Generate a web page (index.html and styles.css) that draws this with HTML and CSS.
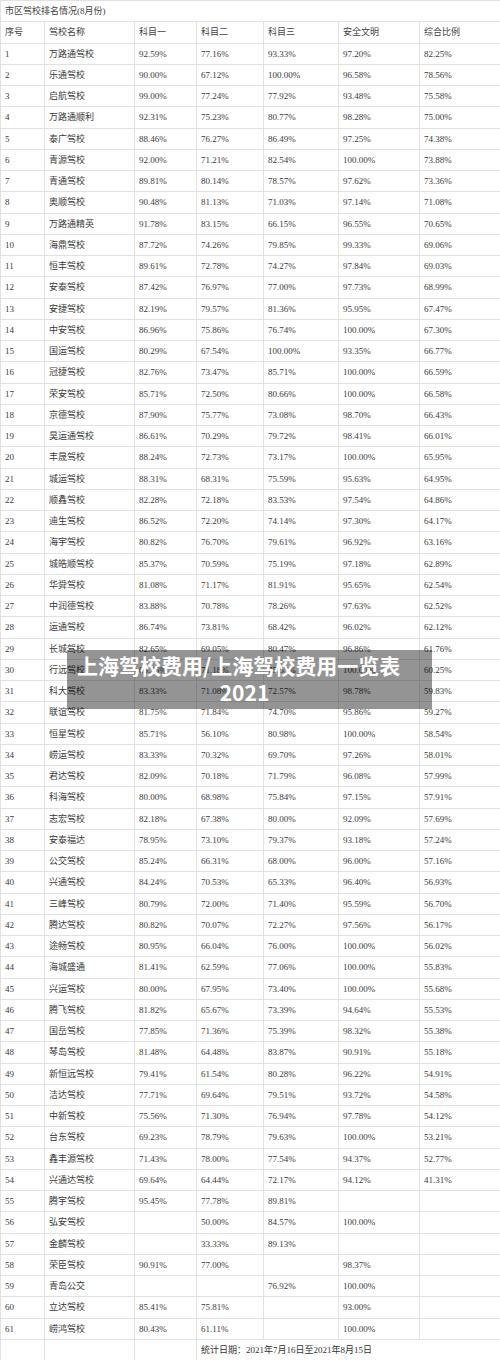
FILE: index.html
```html
<!DOCTYPE html>
<html lang="zh-CN">
<head>
<meta charset="utf-8">
<title>上海驾校费用</title>
<link rel="stylesheet" href="styles.css">
</head>
<body>
<div class="page">
<table class="sheet">
<colgroup>
<col class="c1"><col class="c2"><col class="c3"><col class="c4"><col class="c5"><col class="c6"><col class="c7">
</colgroup>
<tbody>
<tr class="title-row"><td colspan="7">市区驾校排名情况(8月份)</td></tr>
<tr class="head-row"><td>序号</td><td>驾校名称</td><td>科目一</td><td>科目二</td><td>科目三</td><td>安全文明</td><td>综合比例</td></tr>
<tr><td>1</td><td>万路通驾校</td><td>92.59%</td><td>77.16%</td><td>93.33%</td><td>97.20%</td><td>82.25%</td></tr>
<tr><td>2</td><td>乐通驾校</td><td>90.00%</td><td>67.12%</td><td>100.00%</td><td>96.58%</td><td>78.56%</td></tr>
<tr><td>3</td><td>启航驾校</td><td>99.00%</td><td>77.24%</td><td>77.92%</td><td>93.48%</td><td>75.58%</td></tr>
<tr><td>4</td><td>万路通顺利</td><td>92.31%</td><td>75.23%</td><td>80.77%</td><td>98.28%</td><td>75.00%</td></tr>
<tr><td>5</td><td>泰广驾校</td><td>88.46%</td><td>76.27%</td><td>86.49%</td><td>97.25%</td><td>74.38%</td></tr>
<tr><td>6</td><td>青源驾校</td><td>92.00%</td><td>71.21%</td><td>82.54%</td><td>100.00%</td><td>73.88%</td></tr>
<tr><td>7</td><td>青通驾校</td><td>89.81%</td><td>80.14%</td><td>78.57%</td><td>97.62%</td><td>73.36%</td></tr>
<tr><td>8</td><td>奥顺驾校</td><td>90.48%</td><td>81.13%</td><td>71.03%</td><td>97.14%</td><td>71.08%</td></tr>
<tr><td>9</td><td>万路通精英</td><td>91.78%</td><td>83.15%</td><td>66.15%</td><td>96.55%</td><td>70.65%</td></tr>
<tr><td>10</td><td>海鼎驾校</td><td>87.72%</td><td>74.26%</td><td>79.85%</td><td>99.33%</td><td>69.06%</td></tr>
<tr><td>11</td><td>恒丰驾校</td><td>89.61%</td><td>72.78%</td><td>74.27%</td><td>97.84%</td><td>69.03%</td></tr>
<tr><td>12</td><td>安泰驾校</td><td>87.42%</td><td>76.97%</td><td>77.00%</td><td>97.73%</td><td>68.99%</td></tr>
<tr><td>13</td><td>安捷驾校</td><td>82.19%</td><td>79.57%</td><td>81.36%</td><td>95.95%</td><td>67.47%</td></tr>
<tr><td>14</td><td>中安驾校</td><td>86.96%</td><td>75.86%</td><td>76.74%</td><td>100.00%</td><td>67.30%</td></tr>
<tr><td>15</td><td>国运驾校</td><td>80.29%</td><td>67.54%</td><td>100.00%</td><td>93.35%</td><td>66.77%</td></tr>
<tr><td>16</td><td>冠捷驾校</td><td>82.76%</td><td>73.47%</td><td>85.71%</td><td>100.00%</td><td>66.59%</td></tr>
<tr><td>17</td><td>荣安驾校</td><td>85.71%</td><td>72.50%</td><td>80.66%</td><td>100.00%</td><td>66.58%</td></tr>
<tr><td>18</td><td>京德驾校</td><td>87.90%</td><td>75.77%</td><td>73.08%</td><td>98.70%</td><td>66.43%</td></tr>
<tr><td>19</td><td>昊运通驾校</td><td>86.61%</td><td>70.29%</td><td>79.72%</td><td>98.41%</td><td>66.01%</td></tr>
<tr><td>20</td><td>丰晟驾校</td><td>88.24%</td><td>72.73%</td><td>73.17%</td><td>100.00%</td><td>65.95%</td></tr>
<tr><td>21</td><td>城运驾校</td><td>88.31%</td><td>68.31%</td><td>75.59%</td><td>95.63%</td><td>64.95%</td></tr>
<tr><td>22</td><td>顺鑫驾校</td><td>82.28%</td><td>72.18%</td><td>83.53%</td><td>97.54%</td><td>64.86%</td></tr>
<tr><td>23</td><td>迪生驾校</td><td>86.52%</td><td>72.20%</td><td>74.14%</td><td>97.30%</td><td>64.17%</td></tr>
<tr><td>24</td><td>海宇驾校</td><td>80.82%</td><td>76.70%</td><td>79.61%</td><td>96.92%</td><td>63.16%</td></tr>
<tr><td>25</td><td>城皓顺驾校</td><td>85.37%</td><td>70.59%</td><td>75.19%</td><td>97.18%</td><td>62.89%</td></tr>
<tr><td>26</td><td>华舜驾校</td><td>81.08%</td><td>71.17%</td><td>81.91%</td><td>95.65%</td><td>62.54%</td></tr>
<tr><td>27</td><td>中润德驾校</td><td>83.88%</td><td>70.78%</td><td>78.26%</td><td>97.63%</td><td>62.52%</td></tr>
<tr><td>28</td><td>运通驾校</td><td>86.74%</td><td>73.81%</td><td>68.42%</td><td>96.02%</td><td>62.12%</td></tr>
<tr><td>29</td><td>长城驾校</td><td>82.65%</td><td>69.05%</td><td>80.47%</td><td>96.86%</td><td>61.76%</td></tr>
<tr><td>30</td><td>行远驾校</td><td>69.35%</td><td>71.18%</td><td>75.55%</td><td>100.00%</td><td>60.25%</td></tr>
<tr><td>31</td><td>科大驾校</td><td>83.33%</td><td>71.08%</td><td>72.57%</td><td>98.78%</td><td>59.83%</td></tr>
<tr><td>32</td><td>联谊驾校</td><td>81.75%</td><td>71.84%</td><td>74.70%</td><td>95.86%</td><td>59.27%</td></tr>
<tr><td>33</td><td>恒星驾校</td><td>85.71%</td><td>56.10%</td><td>80.98%</td><td>100.00%</td><td>58.54%</td></tr>
<tr><td>34</td><td>崂运驾校</td><td>83.33%</td><td>70.32%</td><td>69.70%</td><td>97.26%</td><td>58.01%</td></tr>
<tr><td>35</td><td>君达驾校</td><td>82.09%</td><td>70.18%</td><td>71.79%</td><td>96.08%</td><td>57.99%</td></tr>
<tr><td>36</td><td>科海驾校</td><td>80.00%</td><td>68.98%</td><td>75.84%</td><td>97.15%</td><td>57.91%</td></tr>
<tr><td>37</td><td>志宏驾校</td><td>82.18%</td><td>67.38%</td><td>80.00%</td><td>92.09%</td><td>57.69%</td></tr>
<tr><td>38</td><td>安泰福达</td><td>78.95%</td><td>73.10%</td><td>79.37%</td><td>93.18%</td><td>57.24%</td></tr>
<tr><td>39</td><td>公交驾校</td><td>85.24%</td><td>66.31%</td><td>68.00%</td><td>96.00%</td><td>57.16%</td></tr>
<tr><td>40</td><td>兴通驾校</td><td>84.24%</td><td>70.53%</td><td>65.33%</td><td>96.40%</td><td>56.93%</td></tr>
<tr><td>41</td><td>三峰驾校</td><td>80.79%</td><td>72.00%</td><td>71.40%</td><td>95.59%</td><td>56.70%</td></tr>
<tr><td>42</td><td>腾达驾校</td><td>80.82%</td><td>70.07%</td><td>72.27%</td><td>97.56%</td><td>56.17%</td></tr>
<tr><td>43</td><td>途畅驾校</td><td>80.95%</td><td>66.04%</td><td>76.00%</td><td>100.00%</td><td>56.02%</td></tr>
<tr><td>44</td><td>海城盛通</td><td>81.41%</td><td>62.59%</td><td>77.06%</td><td>100.00%</td><td>55.83%</td></tr>
<tr><td>45</td><td>兴运驾校</td><td>80.00%</td><td>67.95%</td><td>73.40%</td><td>100.00%</td><td>55.68%</td></tr>
<tr><td>46</td><td>腾飞驾校</td><td>81.82%</td><td>65.67%</td><td>73.39%</td><td>94.64%</td><td>55.53%</td></tr>
<tr><td>47</td><td>国岳驾校</td><td>77.85%</td><td>71.36%</td><td>75.39%</td><td>98.32%</td><td>55.38%</td></tr>
<tr><td>48</td><td>琴岛驾校</td><td>81.48%</td><td>64.48%</td><td>83.87%</td><td>90.91%</td><td>55.18%</td></tr>
<tr><td>49</td><td>新恒远驾校</td><td>79.41%</td><td>61.54%</td><td>80.28%</td><td>96.22%</td><td>54.91%</td></tr>
<tr><td>50</td><td>洁达驾校</td><td>77.71%</td><td>69.64%</td><td>79.51%</td><td>93.72%</td><td>54.58%</td></tr>
<tr><td>51</td><td>中新驾校</td><td>75.56%</td><td>71.30%</td><td>76.94%</td><td>97.78%</td><td>54.12%</td></tr>
<tr><td>52</td><td>台东驾校</td><td>69.23%</td><td>78.79%</td><td>79.63%</td><td>100.00%</td><td>53.21%</td></tr>
<tr><td>53</td><td>鑫丰源驾校</td><td>71.43%</td><td>78.00%</td><td>77.54%</td><td>94.37%</td><td>52.77%</td></tr>
<tr><td>54</td><td>兴通达驾校</td><td>69.64%</td><td>64.44%</td><td>72.17%</td><td>94.12%</td><td>41.31%</td></tr>
<tr><td>55</td><td>腾宇驾校</td><td>95.45%</td><td>77.78%</td><td>89.81%</td><td></td><td></td></tr>
<tr><td>56</td><td>弘安驾校</td><td></td><td>50.00%</td><td>84.57%</td><td>100.00%</td><td></td></tr>
<tr><td>57</td><td>金麟驾校</td><td></td><td>33.33%</td><td>89.13%</td><td></td><td></td></tr>
<tr><td>58</td><td>荣臣驾校</td><td>90.91%</td><td>77.00%</td><td></td><td>98.37%</td><td></td></tr>
<tr><td>59</td><td>青岛公交</td><td></td><td></td><td>76.92%</td><td>100.00%</td><td></td></tr>
<tr><td>60</td><td>立达驾校</td><td>85.41%</td><td>75.81%</td><td></td><td>93.00%</td><td></td></tr>
<tr><td>61</td><td>崂鸿驾校</td><td>80.43%</td><td>61.11%</td><td></td><td>100.00%</td><td></td></tr>
<tr class="foot-row"><td></td><td></td><td></td><td colspan="4" class="stat">统计日期：2021年7月16日至2021年8月15日</td></tr>
</tbody>
</table>
<div class="banner">
<div class="banner-line1">上海驾校费用/上海驾校费用一览表</div>
<div class="banner-line2">2021</div>
</div>
</div>
</body>
</html>
```
FILE: styles.css
```css
html, body {
  margin: 0;
  padding: 0;
  background: #ffffff;
}

.page {
  position: relative;
  width: 500px;
}

.sheet {
  width: 500px;
  table-layout: fixed;
  border-collapse: collapse;
  font-family: "Liberation Serif", "Noto Sans CJK SC", serif;
  font-size: 9px;
  color: #3a3a3a;
}

.c1 { width: 44px; }
.c2 { width: 90px; }
.c3 { width: 62px; }
.c4 { width: 67px; }
.c5 { width: 75px; }
.c6 { width: 81px; }
.c7 { width: 81px; }

.sheet tr {
  height: 21.25px;
}

.sheet td {
  border: 1px solid #e2e2e2;
  padding: 0 0 0 4px;
  line-height: 12px;
  vertical-align: middle;
  white-space: nowrap;
  overflow: hidden;
}

.title-row td {
  color: #444444;
}

.head-row td {
  color: #444444;
}

.stat {
  padding-left: 7px;
  color: #333333;
}

.banner {
  position: absolute;
  left: 67px;
  top: 650px;
  width: 365px;
  height: 59px;
  box-sizing: border-box;
  padding: 2px 20px 0 10px;
  background: rgba(0, 0, 0, 0.42);
  color: #ffffff;
  font-family: "Noto Sans CJK SC", "Noto Sans", sans-serif;
  font-weight: 700;
  font-size: 21px;
  line-height: 27px;
  white-space: nowrap;
}

.banner-line1 {
  text-align: left;
}

.banner-line2 {
  text-align: center;
}
```
